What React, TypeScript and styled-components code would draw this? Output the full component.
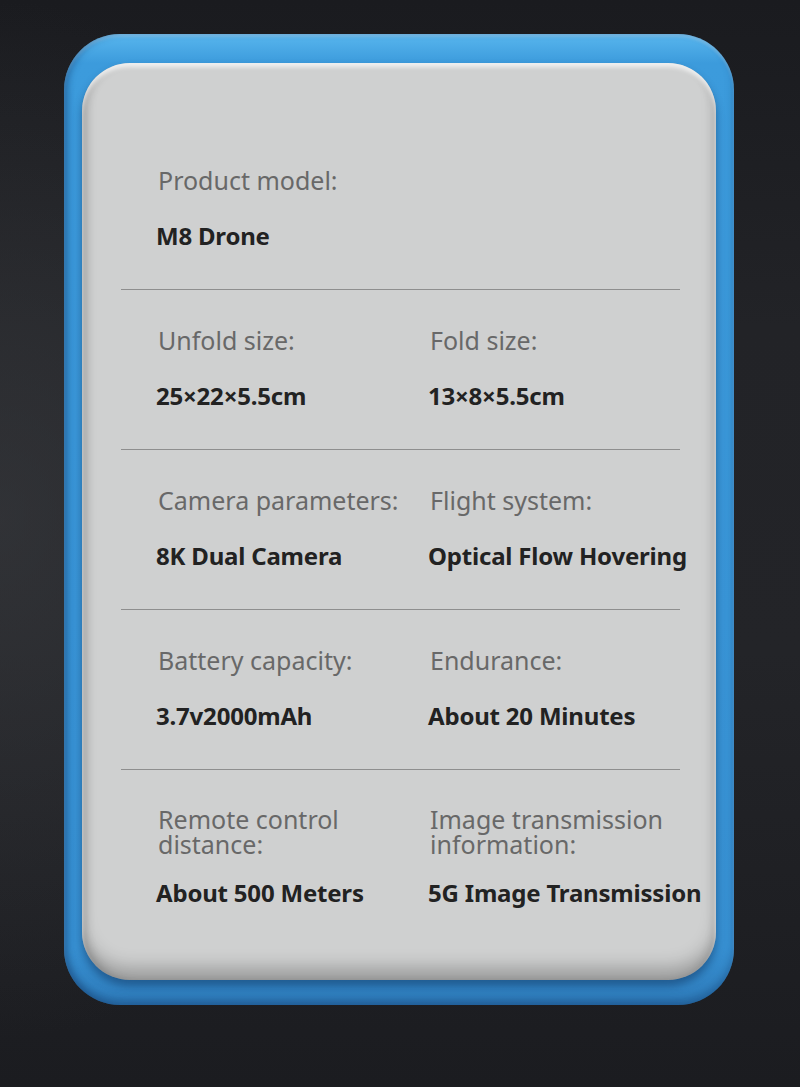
import React from 'react';
import styled, { createGlobalStyle } from 'styled-components';

const GlobalStyle = createGlobalStyle`
  html, body {
    margin: 0;
    padding: 0;
    background: #1c1d21;
  }
  body {
    font-family: "Noto Sans", "Open Sans", sans-serif;
  }
`;

const Page = styled.div`
  width: 800px;
  height: 1087px;
  box-sizing: border-box;
  padding: 34px 0 0 64px;
  background:
    radial-gradient(ellipse 380px 520px at 0px 520px, rgba(60, 62, 66, 0.55), rgba(60, 62, 66, 0) 100%),
    linear-gradient(180deg, #1a1b1f 0%, #222327 30%, #232428 60%, #1b1c20 100%);
`;

const Frame = styled.div`
  width: 670px;
  height: 971px;
  box-sizing: border-box;
  padding: 29px 18px 25px 18px;
  border-radius: 56px;
  background: linear-gradient(180deg, #58b6ee 0%, #3c9bdc 3%, #3995d7 60%, #3790d2 94%, #2f7dbc 100%);
  box-shadow:
    inset 4px 0 6px rgba(20, 60, 110, 0.35),
    inset 0 -6px 8px rgba(20, 60, 110, 0.35),
    inset 0 3px 3px rgba(255, 255, 255, 0.25);
`;

const Card = styled.div`
  height: 100%;
  box-sizing: border-box;
  padding-top: 104px;
  border-radius: 48px;
  background: #cfd0d0;
  box-shadow:
    0 6px 9px rgba(10, 40, 80, 0.45),
    inset 0 4px 4px rgba(255, 255, 255, 0.75),
    inset 8px 0 10px -4px rgba(0, 0, 0, 0.18),
    inset -6px 0 10px -4px rgba(0, 0, 0, 0.12),
    inset 0 -16px 18px -4px rgba(0, 0, 0, 0.26);
`;

const Section = styled.div<{ $first?: boolean; $last?: boolean }>`
  margin: 0 36px 0 39px;
  padding: ${(p) => (p.$first ? '0' : '37px')} 0 40px 35px;
  display: grid;
  grid-template-columns: 272px 1fr;
  border-bottom: ${(p) => (p.$last ? 'none' : '1px solid #8e8e8e')};
`;

const Cell = styled.div<{ $gap: number }>`
  display: flex;
  flex-direction: column;
  gap: ${(p) => p.$gap}px;
`;

const Label = styled.div<{ $tight?: boolean }>`
  font-size: 25px;
  line-height: ${(p) => (p.$tight ? '25px' : '26px')};
  color: #686868;
  padding-left: 2px;
  white-space: pre-line;
`;

const Value = styled.div`
  font-size: 24px;
  line-height: 26px;
  font-weight: 700;
  letter-spacing: -0.2px;
  color: #222222;
  white-space: nowrap;
`;

type Spec = { label: string; value: string };

const rows: Spec[][] = [
  [{ label: 'Product model:', value: 'M8 Drone' }],
  [
    { label: 'Unfold size:', value: '25×22×5.5cm' },
    { label: 'Fold size:', value: '13×8×5.5cm' },
  ],
  [
    { label: 'Camera parameters:', value: '8K Dual Camera' },
    { label: 'Flight system:', value: 'Optical Flow Hovering' },
  ],
  [
    { label: 'Battery capacity:', value: '3.7v2000mAh' },
    { label: 'Endurance:', value: 'About 20 Minutes' },
  ],
  [
    { label: 'Remote control\ndistance:', value: 'About 500 Meters' },
    { label: 'Image transmission\ninformation:', value: '5G Image Transmission' },
  ],
];

export default function App() {
  return (
    <>
      <GlobalStyle />
      <Page>
        <Frame>
          <Card>
            {rows.map((row, i) => {
              const last = i === rows.length - 1;
              return (
                <Section key={i} $first={i === 0} $last={last}>
                  {row.map((s) => (
                    <Cell key={s.label} $gap={last ? 23 : 30}>
                      <Label $tight={last}>{s.label}</Label>
                      <Value>{s.value}</Value>
                    </Cell>
                  ))}
                </Section>
              );
            })}
          </Card>
        </Frame>
      </Page>
    </>
  );
}
